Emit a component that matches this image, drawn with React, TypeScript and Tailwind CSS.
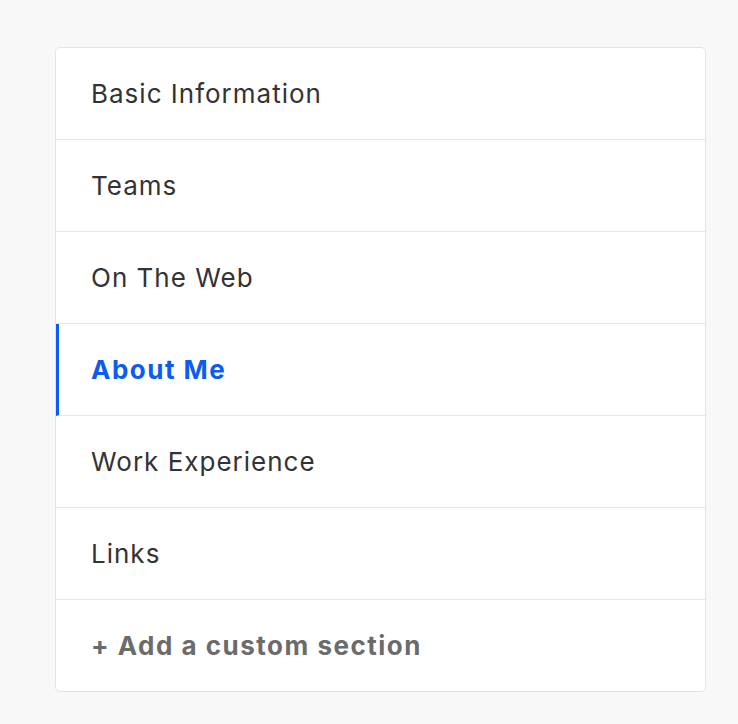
import React from "react";

const items = ["Basic Information", "Teams", "On The Web", "About Me", "Work Experience", "Links"];

export default function App() {
  return (
    <div className="min-h-[724px] w-[738px] bg-[#f8f8f8] pt-[47px] pl-[55px]" style={{ fontFamily: "Inter, 'Noto Sans', sans-serif" }}>
      <div className="w-[651px] rounded-[5px] border border-[#e3e3e3] bg-white overflow-hidden">
        {items.map((t) => {
          const active = t === "About Me";
          return (
            <div
              key={t}
              className={
                active
                  ? "flex h-[92px] items-center border-b border-[#e6e6e6] border-l-[3px] border-l-[#0b5cf0] pl-[32px] text-[26px] font-bold tracking-[1.5px] text-[#0b5cf0]"
                  : "flex h-[92px] items-center border-b border-[#e6e6e6] pl-[35px] text-[26px] tracking-[1px] text-[#333333]"
              }
            >
              {t}
            </div>
          );
        })}
        <div className="flex h-[91px] items-center pl-[35px] text-[26px] font-bold tracking-[1.5px] text-[#6b6b6b]">+ Add a custom section</div>
      </div>
    </div>
  );
}
